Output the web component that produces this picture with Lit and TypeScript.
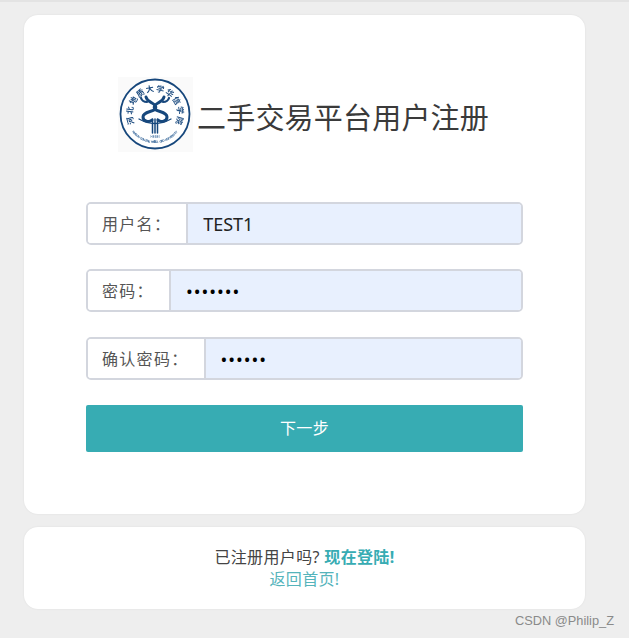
import { LitElement, html, css, svg } from "lit";
import { customElement } from "lit/decorators.js";

const FONT = css`"Noto Sans", "Noto Sans CJK SC", sans-serif`;
const RING = "河北地质大学华信学院".split("");
const LATIN = "HUAXIN COLLEGE HEBEI GEO UNIVERSITY".split("");

@customElement("app-root")
export class AppRoot extends LitElement {
  static styles = css`
    :host { display: block; width: 629px; height: 638px; overflow: hidden; background: #eeeeee; position: relative; font-family: ${FONT}; }
    .topline { height: 2px; background: #e3e3e3; }
    .page { padding: 13px 44px 0 24px; display: flex; flex-direction: column; gap: 13px; }
    .card { background: #fff; border-radius: 14px; box-shadow: 0 0 2px rgba(0,0,0,.08); }
    .main { height: 499px; box-sizing: border-box; padding: 62px 62px 0; display: flex; flex-direction: column; }
    .brand { display: flex; align-items: center; justify-content: center; gap: 4px; height: 75px; margin-bottom: 50px; padding-right: 2px; }
    .brand svg { width: 75px; height: 75px; flex: none; }
    h1 { margin: 0; padding-top: 5px; font-size: 29px; font-weight: 400; color: #3a3a3a; line-height: 1; white-space: nowrap; letter-spacing: .2px; }
    .row { display: flex; height: 43px; box-sizing: border-box; border: 2px solid #d3d6de; border-radius: 5px; overflow: hidden; margin-bottom: 25px; }
    .row.first { margin-bottom: 24px; }
    .addon { display: flex; align-items: center; padding: 0 15px 2px 14px; font-size: 16px; color: #555; white-space: nowrap; border-right: 2px solid #d3d6de; background: #fff; letter-spacing: 1.3px; }
    input { flex: 1; min-width: 0; border: 0; outline: 0; margin: 0; padding: 0 15px; background: #e8f0fe; color: #222; font-family: ${FONT}; font-size: 18px; }
    input[type="password"] { letter-spacing: 1px; color: #000; }
    .btn { height: 47px; border: 0; border-radius: 2px; background: #37acb3; color: #fff; font-family: ${FONT}; font-size: 16px; width: 100%; padding: 0 0 3px; letter-spacing: .4px; }
    .foot { height: 82px; box-sizing: border-box; padding-top: 19px; text-align: center; font-size: 16px; line-height: 22px; color: #444; letter-spacing: .35px; }
    a { color: #37acb3; text-decoration: none; }
    a.strong { font-weight: 700; }
    a.plain { color: #55b4bb; }
    .mark { position: absolute; right: 15px; top: 612px; font-size: 12.8px; line-height: 18px; color: #8a8a8a; font-family: "Liberation Sans", sans-serif; }
  `;

  private logo() {
    const C = 37;
    const ring = RING.map((ch, i) => {
      const a = -105 + (210 * i) / (RING.length - 1);
      return svg`<text transform="rotate(${a} ${C} ${C}) translate(${C} ${C - 22.5})" font-size="8" font-weight="700" text-anchor="middle" fill="#1d4c80" font-family='"Noto Sans CJK SC", sans-serif'>${ch}</text>`;
    });
    const latin = LATIN.map((ch, i) => {
      const a = 50 - (100 * i) / (LATIN.length - 1);
      return svg`<text transform="rotate(${a} ${C} ${C}) translate(${C} ${C + 29})" font-size="3.2" font-weight="700" text-anchor="middle" fill="#2f6196" font-family='"Liberation Sans", sans-serif'>${ch}</text>`;
    });
    return html`<svg viewBox="0 0 75 75" role="img" aria-label="校徽">
      <defs><filter id="soft" x="-5%" y="-5%" width="110%" height="110%"><feGaussianBlur stdDeviation=".35"></feGaussianBlur></filter></defs>
      <rect width="75" height="75" fill="#fafafa"></rect>
      <g filter="url(#soft)">
        <circle cx="37" cy="37" r="34.5" fill="#fff" stroke="#17477c" stroke-width="1.8"></circle>
        ${ring}
        ${latin}
        <g fill="none" stroke="#17477c" stroke-linecap="round" stroke-linejoin="round">
          <path stroke-width="3" d="M28 20c1 4 4 5 6 6 4 2 5 5 2 7-3 2-11 2-11 7 0 4 6 6 9 3"></path>
          <path stroke-width="3" d="M46 20c-1 4-4 5-6 6-4 2-5 5-2 7 3 2 11 2 11 7 0 4-6 6-9 3"></path>
          <path stroke-width="2.2" d="M23 21c1 3 3 4 6 4M51 21c-1 3-3 4-6 4"></path>
          <path stroke-width="1.3" d="M21 42q16 9 32 0"></path>
          <path stroke-width="1.5" d="M34.5 42v14M37 42v14M39.5 42v14"></path>
        </g>
        <text x="37" y="61" font-size="3" text-anchor="middle" fill="#2f6196" font-family='"Liberation Sans", sans-serif'>HEBEI</text>
      </g>
    </svg>`;
  }

  render() {
    return html`
      <div class="topline"></div>
      <div class="page">
        <section class="card main">
          <div class="brand">${this.logo()}<h1>二手交易平台用户注册</h1></div>
          <div class="row first"><span class="addon">用户名：</span><input type="text" value="TEST1" /></div>
          <div class="row"><span class="addon">密码：</span><input type="password" value="1234567" /></div>
          <div class="row"><span class="addon">确认密码：</span><input type="password" value="123456" /></div>
          <button class="btn">下一步</button>
        </section>
        <section class="card foot">
          <div>已注册用户吗? <a class="strong" href="#">现在登陆!</a></div>
          <div><a class="plain" href="#">返回首页!</a></div>
        </section>
      </div>
      <div class="mark">CSDN @Philip_Z</div>
    `;
  }
}
